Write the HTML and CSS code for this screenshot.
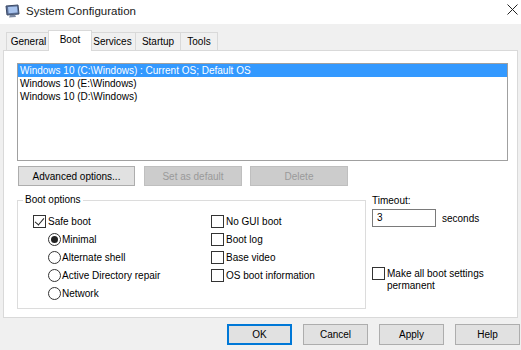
FILE: index.html
```html
<!DOCTYPE html>
<html lang="en">
<head>
  <meta charset="UTF-8" />
  <title>System Configuration</title>
  <link rel="stylesheet" href="styles.css">
</head>
<body>
  <div class="titlebar">
    <svg class="app-icon" width="15" height="14" viewBox="0 0 15 14">
      <path d="M1 2 L13 1 L14 10 L2 11 Z" fill="#5a6f96" stroke="#3c4a66" stroke-width="1"/>
      <path d="M3 3 L12 2.5 L12.6 8.6 L3.6 9.2 Z" fill="#a9c4ee"/>
      <path d="M5 11 L10 10.6 L11 13 L4 13.4 Z" fill="#7d8aa3"/>
    </svg>
    <span class="title">System Configuration</span>
    <svg class="close" width="11" height="11" viewBox="0 0 11 11">
      <path d="M0.5 0.5 L10.5 10.5 M10.5 0.5 L0.5 10.5" stroke="#222" stroke-width="1"/>
    </svg>
  </div>

  <div class="tabstrip">
    <div class="tab t-general">General</div>
    <div class="tab t-boot active">Boot</div>
    <div class="tab t-services">Services</div>
    <div class="tab t-startup">Startup</div>
    <div class="tab t-tools">Tools</div>
  </div>

  <div class="panel">
    <div class="bootlist">
      <div class="entry selected">Windows 10 (C:\Windows) : Current OS; Default OS</div>
      <div class="entry">Windows 10 (E:\Windows)</div>
      <div class="entry">Windows 10 (D:\Windows)</div>
    </div>

    <div class="btnrow">
      <button class="btn b-adv">Advanced options...</button>
      <button class="btn b-def" disabled>Set as default</button>
      <button class="btn b-del" disabled>Delete</button>
    </div>

    <div class="lower">
      <fieldset class="group">
        <legend>Boot options</legend>
        <div class="opts">
          <div class="col">
            <div class="row"><span class="chk on"></span>Safe boot</div>
            <div class="row sub"><span class="radio on"></span>Minimal</div>
            <div class="row sub"><span class="radio"></span>Alternate shell</div>
            <div class="row sub"><span class="radio"></span>Active Directory repair</div>
            <div class="row sub"><span class="radio"></span>Network</div>
          </div>
          <div class="col">
            <div class="row"><span class="chk"></span>No GUI boot</div>
            <div class="row"><span class="chk"></span>Boot log</div>
            <div class="row"><span class="chk"></span>Base video</div>
            <div class="row"><span class="chk"></span>OS boot information</div>
          </div>
        </div>
      </fieldset>

      <div class="side">
        <div class="lbl">Timeout:</div>
        <div class="trow">
          <div class="tbox">3</div>
          <span>seconds</span>
        </div>
        <div class="perm">
          <span class="chk"></span>
          <span class="perm-text">Make all boot settings<br>permanent</span>
        </div>
      </div>
    </div>
  </div>

  <div class="footer">
    <button class="btn fbtn default">OK</button>
    <button class="btn fbtn">Cancel</button>
    <button class="btn fbtn">Apply</button>
    <button class="btn fbtn">Help</button>
  </div>
</body>
</html>
```

FILE: styles.css
```css
body {
  margin: 0;
  width: 521px;
  height: 350px;
  overflow: hidden;
  background: #f0f0f0;
  font-family: 'Liberation Sans', Arial, sans-serif;
  font-size: 10px;
  color: #000;
}
.titlebar {
  height: 24px;
  background: #fff;
  display: flex;
  align-items: center;
  padding-left: 5px;
  box-sizing: border-box;
}
.app-icon {
  margin-right: 6px;
  margin-top: -3px;
}
.title {
  font-size: 11.5px;
  margin-top: -3px;
  color: #1a1a1a;
}
.close {
  margin-left: auto;
  margin-right: 3px;
  margin-top: -5px;
}
.tabstrip {
  height: 26px;
  display: flex;
  align-items: flex-end;
  padding-left: 6px;
  box-sizing: border-box;
}
.tab {
  height: 18px;
  line-height: 17px;
  border: 1px solid #d9d9d9;
  border-bottom: none;
  background: #f0f0f0;
  text-align: center;
  box-sizing: border-box;
  margin-right: -1px;
}
.tab.active {
  background: #fff;
  height: 21px;
  line-height: 18px;
  margin: 0 -3px -1px -2px;
  position: relative;
  z-index: 1;
}
.t-general { width: 45px; }
.t-boot { width: 44px; }
.t-services { width: 47px; }
.t-startup { width: 46px; }
.t-tools { width: 38px; }
.panel {
  margin-left: 3px;
  width: 515px;
  height: 268px;
  background: #fff;
  border: 1px solid #d9d9d9;
  box-sizing: border-box;
  padding: 12px 0 0 13px;
}
.bootlist {
  width: 491px;
  height: 98px;
  border: 1px solid #a0a0a0;
  box-sizing: border-box;
}
.entry {
  height: 13px;
  line-height: 13px;
  padding-left: 2px;
}
.entry.selected {
  background: #3399ff;
  color: #fff;
}
.btnrow {
  display: flex;
  margin-top: 5px;
  padding-left: 1px;
}
.btn {
  font-family: inherit;
  font-size: 10px;
  height: 20px;
  padding: 0;
  background: #e1e1e1;
  border: 1px solid #adadad;
  color: #000;
  box-sizing: border-box;
}
.btn:disabled {
  background: #cccccc;
  border-color: #bfbfbf;
  color: #9a9a9a;
}
.b-adv { width: 117px; margin-right: 9px; }
.b-def { width: 98px; margin-right: 8px; }
.b-del { width: 98px; }
.lower {
  display: flex;
  margin-top: 7px;
}
.group {
  margin: 0;
  width: 349px;
  padding: 0 0 6px 5px;
  border: 1px solid #dcdcdc;
  box-sizing: border-box;
}
.group legend {
  padding: 0 2px;
  line-height: 14px;
}
.opts {
  display: grid;
  grid-template-columns: 178px auto;
  padding: 5px 0 0 10px;
}
.row {
  height: 18px;
  display: flex;
  align-items: center;
}
.row.sub {
  padding-left: 15px;
}
.chk {
  width: 13px;
  height: 13px;
  border: 1px solid #333;
  box-sizing: border-box;
  background: #fff;
  margin-right: 2px;
  position: relative;
  flex: none;
}
.chk.on::after {
  content: "";
  position: absolute;
  left: 3px;
  top: 0px;
  width: 4px;
  height: 8px;
  border: solid #222;
  border-width: 0 1px 1px 0;
  transform: rotate(40deg);
}
.radio {
  width: 13px;
  height: 13px;
  border: 1px solid #333;
  border-radius: 50%;
  box-sizing: border-box;
  background: #fff;
  margin-right: 1px;
  display: flex;
  align-items: center;
  justify-content: center;
  flex: none;
}
.radio.on::after {
  content: "";
  width: 7px;
  height: 7px;
  border-radius: 50%;
  background: #222;
}
.side {
  margin-left: 6px;
}
.lbl {
  line-height: 14px;
  margin-top: 1px;
}
.trow {
  display: flex;
  align-items: center;
  margin-top: 1px;
}
.tbox {
  width: 64px;
  height: 18px;
  border: 1px solid #7a7a7a;
  box-sizing: border-box;
  line-height: 16px;
  padding-left: 4px;
  margin-right: 6px;
}
.perm {
  display: flex;
  align-items: flex-start;
  margin-top: 40px;
}
.perm .chk {
  margin-right: 2px;
}
.perm-text {
  line-height: 12px;
  margin-top: 1px;
}
.footer {
  display: flex;
  gap: 11px;
  padding: 6px 0 0 227px;
}
.fbtn {
  width: 65px;
  height: 21px;
}
.fbtn.default {
  border-color: #0078d7;
  box-shadow: inset 0 0 0 1px #0078d7;
}
```
